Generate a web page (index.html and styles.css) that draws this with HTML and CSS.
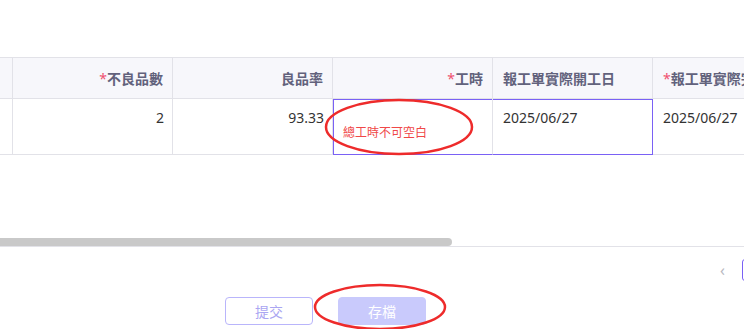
FILE: index.html
```html
<!DOCTYPE html>
<html lang="zh-Hant">
<head>
<meta charset="UTF-8">
<title>報工單</title>
<link rel="stylesheet" href="styles.css">
</head>
<body>
<div class="page">
  <div class="grid-wrap">
    <table class="grid">
      <colgroup>
        <col class="col-edge">
        <col class="col">
        <col class="col">
        <col class="col">
        <col class="col">
        <col class="col">
      </colgroup>
      <thead>
        <tr>
          <th></th>
          <th class="num"><span class="req">*</span>不良品數</th>
          <th class="num">良品率</th>
          <th class="num"><span class="req">*</span>工時</th>
          <th>報工單實際開工日</th>
          <th><span class="req">*</span>報工單實際完工日</th>
        </tr>
      </thead>
      <tbody>
        <tr>
          <td></td>
          <td class="num">2</td>
          <td class="num">93.33</td>
          <td class="active active-first">
            <div class="blank"></div>
            <div class="err">總工時不可空白</div>
          </td>
          <td class="active active-last">2025/06/27</td>
          <td>2025/06/27</td>
        </tr>
      </tbody>
    </table>
    <div class="scroll-track"><div class="scroll-thumb"></div></div>
    <svg class="mark mark-cell" width="152" height="58" viewBox="0 0 152 58"><ellipse cx="76" cy="29" rx="73" ry="27" fill="none" stroke="#ee2b2b" stroke-width="2.5"/></svg>
  </div>

  <div class="pager">
    <span class="pager-prev">&lsaquo;</span>
    <span class="pager-item"></span>
  </div>

  <div class="actions">
    <button class="btn btn-outline">提交</button>
    <button class="btn btn-fill">存檔</button>
    <svg class="mark mark-btn" width="136" height="50" viewBox="0 0 136 50"><ellipse cx="68" cy="25" rx="65" ry="22" fill="none" stroke="#ee2b2b" stroke-width="2.5"/></svg>
  </div>
</div>
</body>
</html>
```

FILE: styles.css
```css
body {
  margin: 0;
  font-family: "Noto Sans", "Noto Sans CJK TC", sans-serif;
  font-size: 14px;
  color: #333;
  background: #fff;
  overflow: hidden;
}

.page {
  width: 744px;
  height: 329px;
  overflow: hidden;
  padding-top: 57px;
  box-sizing: border-box;
}

.grid-wrap {
  position: relative;
  height: 190px;
  border-bottom: 1px solid #e2e2e8;
  box-sizing: border-box;
  overflow: hidden;
}

.grid {
  border-collapse: separate;
  border-spacing: 0;
  table-layout: fixed;
  width: 813px;
}

.col-edge {
  width: 13px;
}

.col {
  width: 160px;
}

.grid th,
.grid td {
  border-right: 1px solid #e2e2e8;
  border-bottom: 1px solid #e2e2e8;
  white-space: nowrap;
  overflow: hidden;
}

.grid th {
  height: 42px;
  border-top: 1px solid #e2e2e8;
  padding: 0 9px 0 10px;
  background: #f7f7fb;
  color: #62627c;
  font-weight: 600;
  text-align: left;
  box-sizing: border-box;
}

.grid td {
  height: 56px;
  padding: 8px 8px 0 10px;
  vertical-align: top;
  line-height: 22px;
  box-sizing: border-box;
}

.grid .num {
  text-align: right;
}

.req {
  color: #f0506e;
  font-weight: 400;
}

.grid td.active {
  border-bottom-color: #7a61f5;
  box-shadow: inset 0 1px 0 #7a61f5;
}

.grid td.active-first {
  box-shadow: inset 0 1px 0 #7a61f5, inset 1px 0 0 #7a61f5;
}

.grid td.active-last {
  border-right-color: #7a61f5;
}

.blank {
  height: 17px;
}

.err {
  color: #f04848;
  font-size: 12px;
  line-height: 18px;
}

.scroll-track {
  position: absolute;
  left: 0;
  right: 0;
  bottom: 0;
  height: 8px;
}

.scroll-thumb {
  width: 452px;
  height: 8px;
  background: #c9c9c9;
  border-radius: 0 4px 4px 0;
}

.mark {
  position: absolute;
  pointer-events: none;
}

.mark-cell {
  left: 323px;
  top: 41px;
}

.pager {
  display: flex;
  align-items: center;
  gap: 17px;
  margin-top: 12px;
  padding-left: 720px;
  height: 22px;
}

.pager-prev {
  color: #b8b8c0;
  font-size: 16px;
  line-height: 22px;
}

.pager-item {
  flex: none;
  width: 24px;
  height: 20px;
  border: 1px solid #7a61f5;
  border-radius: 3px;
}

.actions {
  position: relative;
  display: flex;
  gap: 25px;
  margin-top: 16px;
  padding-left: 225px;
}

.btn {
  width: 88px;
  height: 28px;
  border-radius: 4px;
  font-family: "Noto Sans CJK TC", sans-serif;
  font-size: 14px;
  padding: 0;
}

.btn-outline {
  background: #fff;
  border: 1px solid #b9b5fb;
  color: #aaa6f2;
}

.btn-fill {
  background: #c9cafc;
  border: 1px solid #c9cafc;
  color: #fff;
}

.mark-btn {
  left: 312px;
  top: -15px;
}
```
